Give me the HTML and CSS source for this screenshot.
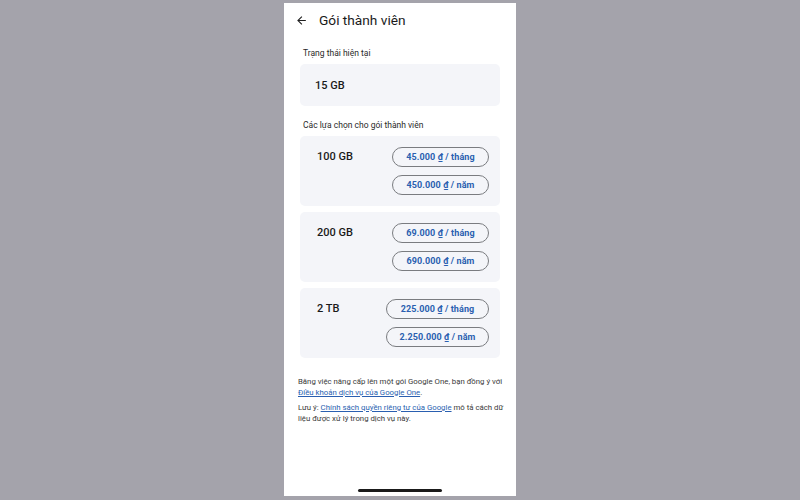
FILE: index.html
```html
<!DOCTYPE html>
<html lang="vi">
<head>
<meta charset="utf-8">
<link rel="stylesheet" href="styles.css">
</head>
<body>
<div class="phone">
  <div class="topbar">
    <svg class="back" width="13" height="13" viewBox="0 0 24 24"><path d="M20 11H7.83l5.59-5.59L12 4l-8 8 8 8 1.41-1.41L7.83 13H20v-2z" fill="#1f1f1f"/></svg>
    <span class="title">Gói thành viên</span>
  </div>
  <div class="label first">Trạng thái hiện tại</div>
  <div class="card current">15 GB</div>
  <div class="label second">Các lựa chọn cho gói thành viên</div>
  <div class="plans">
    <div class="card plan">
      <div class="size">100 GB</div>
      <div class="btns">
        <div class="btn">45.000 ₫ / tháng</div>
        <div class="btn">450.000 ₫ / năm</div>
      </div>
    </div>
    <div class="card plan">
      <div class="size">200 GB</div>
      <div class="btns">
        <div class="btn">69.000 ₫ / tháng</div>
        <div class="btn">690.000 ₫ / năm</div>
      </div>
    </div>
    <div class="card plan">
      <div class="size">2 TB</div>
      <div class="btns wide">
        <div class="btn">225.000 ₫ / tháng</div>
        <div class="btn">2.250.000 ₫ / năm</div>
      </div>
    </div>
  </div>
  <div class="legal">
    <p><span>Bằng việc nâng cấp lên một gói Google One, bạn đồng ý với</span><br><a>Điều khoản dịch vụ của Google One</a>.</p>
    <p><span>Lưu ý: </span><a>Chính sách quyền riêng tư của Google</a><span> mô tả cách dữ</span><br><span>liệu được xử lý trong dịch vụ này.</span></p>
  </div>
  <div class="spacer"></div>
  <div class="home"></div>
</div>
</body>
</html>
```
FILE: styles.css
```css
html, body {
  margin: 0;
  padding: 0;
}
body {
  background: #a4a3ab;
  width: 800px;
  height: 500px;
  overflow: hidden;
  font-family: Roboto, "Noto Sans", sans-serif;
  color: #1a1a1a;
}
.phone {
  background: #ffffff;
  width: 232px;
  height: 493px;
  margin: 3px 0 0 284px;
  display: flex;
  flex-direction: column;
  box-sizing: border-box;
  padding: 0 16px;
}
.topbar {
  display: flex;
  align-items: center;
  height: 33px;
  padding-top: 1px;
  box-sizing: border-box;
}
.back {
  margin-left: -5px;
  margin-right: 11px;
}
.title {
  font-size: 13.7px;
  font-family: Roboto, sans-serif;
  color: #1a1a1a;
}
.label {
  font-size: 8.5px;
  color: #2a2a2a;
  padding-left: 3px;
}
.label.first {
  margin-top: 12px;
  height: 16px;
}
.label.second {
  margin-top: 14px;
  height: 16px;
}
.card {
  background: #f4f5f9;
  border-radius: 5px;
}
.current {
  height: 42px;
  display: flex;
  align-items: center;
  padding-left: 15px;
  font-size: 11px;
  font-weight: 500;
}
.plans {
  display: flex;
  flex-direction: column;
  gap: 6px;
}
.plan {
  height: 70px;
  display: flex;
  justify-content: space-between;
  box-sizing: border-box;
  padding: 11px 11px 0 17px;
}
.size {
  font-size: 11px;
  font-weight: 500;
  padding-top: 3px;
}
.btns {
  display: flex;
  flex-direction: column;
  gap: 8px;
  width: 97px;
}
.btns.wide {
  width: 103px;
}
.btn {
  height: 20px;
  box-sizing: border-box;
  border: 1px solid #7a7c80;
  border-radius: 10px;
  display: flex;
  align-items: center;
  justify-content: center;
  font-size: 9px;
  font-weight: 700;
  color: #2a5fb0;
  letter-spacing: 0.1px;
}
.legal {
  margin-top: 19px;
  margin-left: -2px;
  margin-right: -8px;
  font-size: 7.8px;
  line-height: 10.5px;
  color: #3a3a3a;
  white-space: nowrap;
}
.legal p {
  margin: 0 0 5px 0;
}
.legal a {
  color: #2a5fb0;
  text-decoration: underline;
}
.spacer {
  flex: 1;
}
.home {
  align-self: center;
  width: 84px;
  height: 3px;
  background: #1a1a1a;
  border-radius: 2px;
  margin-bottom: 4px;
}
```
